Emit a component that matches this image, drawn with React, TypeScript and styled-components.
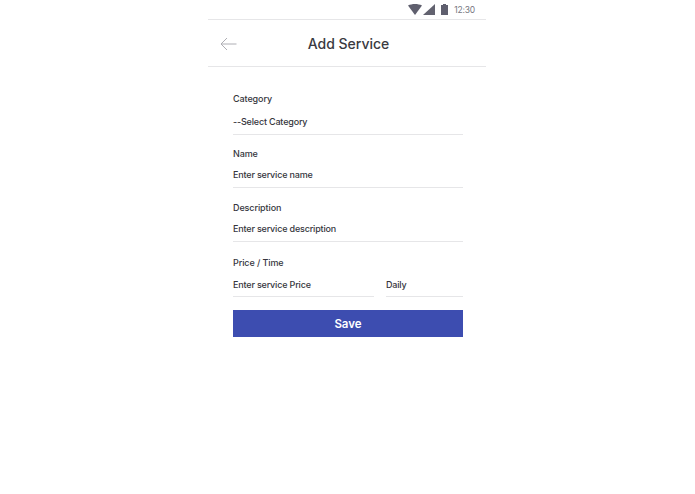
import styled, { createGlobalStyle } from 'styled-components';

const GlobalStyle = createGlobalStyle`
    html, body {
        margin: 0;
        padding: 0;
        background: #fff;
        font-family: Inter, "Liberation Sans", sans-serif;
    }
`;

export default function App() {
    return (
        <Page>
            <GlobalStyle />
            <Phone>
                <StatusBar>
                    <WifiIcon width="14" height="11" viewBox="0 0 14 11">
                        <path d="M0 1.5C4 -0.5 10 -0.5 14 1.5L7 11Z" fill="#5f5f6e" />
                    </WifiIcon>
                    <SignalIcon width="12" height="11" viewBox="0 0 12 11">
                        <path d="M12 0V11H0Z" fill="#62626f" />
                    </SignalIcon>
                    <BatteryIcon width="7" height="11" viewBox="0 0 7 11">
                        <path d="M2 0H5V1H7V11H0V1H2Z" fill="#5f5f6e" />
                    </BatteryIcon>
                    <Clock>12:30</Clock>
                </StatusBar>
                <Header>
                    <BackIcon width="17" height="14" viewBox="0 0 17 14">
                        <path d="M16.5 7H1M7 1L1 7L7 13" fill="none" stroke="#aeaeb4" strokeWidth="1" />
                    </BackIcon>
                    <Title>Add Service</Title>
                </Header>
                <Form>
                    <Field $height={55} $gap={5}>
                        <Label>Category</Label>
                        <Value>--Select Category</Value>
                    </Field>
                    <Field $height={54} $gap={3}>
                        <Label>Name</Label>
                        <Value>Enter service name</Value>
                    </Field>
                    <Field $height={55} $gap={3}>
                        <Label>Description</Label>
                        <Value>Enter service description</Value>
                    </Field>
                    <PriceRow>
                        <Field $height={41} $gap={4}>
                            <Label>Price / Time</Label>
                            <Value>Enter service Price</Value>
                        </Field>
                        <Field $height={41} $gap={4}>
                            <Label />
                            <Value>Daily</Value>
                        </Field>
                    </PriceRow>
                    <SaveButton>Save</SaveButton>
                </Form>
            </Phone>
        </Page>
    );
}

const Page = styled.div`
    display: flex;
    justify-content: center;
    width: 100%;
    height: 100vh;
    background: #fff;
`;

const Phone = styled.div`
    display: flex;
    flex-direction: column;
    width: 278px;
    margin-left: -1px;
`;

const StatusBar = styled.div`
    display: flex;
    align-items: center;
    justify-content: flex-end;
    height: 19px;
    padding-right: 11px;
    border-bottom: 1px solid #e6e6e8;
`;

const WifiIcon = styled.svg`
    margin-right: 1px;
`;

const SignalIcon = styled.svg`
    margin-right: 6px;
`;

const BatteryIcon = styled.svg`
    margin-right: 6px;
`;

const Clock = styled.span`
    font-size: 8.5px;
    letter-spacing: -0.2px;
    color: #77777f;
`;

const Header = styled.div`
    position: relative;
    display: flex;
    align-items: center;
    justify-content: center;
    height: 46px;
    padding-left: 3px;
    border-bottom: 1px solid #e6e6e8;
`;

const BackIcon = styled.svg`
    position: absolute;
    left: 12px;
    top: 17px;
`;

const Title = styled.h1`
    margin: 0;
    font-size: 14px;
    font-weight: 500;
    letter-spacing: 0;
    color: #3a3a41;
`;

const Form = styled.div`
    display: flex;
    flex-direction: column;
    margin-top: 25px;
    padding: 0 23px 0 25px;
`;

const Field = styled.div<{ $height: number; $gap: number }>`
    display: flex;
    flex-direction: column;
    gap: ${props => props.$gap}px;
    height: ${props => props.$height}px;
`;

const Label = styled.label`
    height: 14px;
    font-size: 9px;
    line-height: 14px;
    font-weight: 500;
    letter-spacing: -0.1px;
    color: #36363d;
`;

const Value = styled.div`
    height: 24px;
    box-sizing: border-box;
    border-bottom: 1px solid #e6e6e8;
    font-size: 9px;
    line-height: 22px;
    font-weight: 500;
    letter-spacing: -0.18px;
    color: #36363d;
`;

const PriceRow = styled.div`
    display: grid;
    grid-template-columns: 141px 77px;
    justify-content: space-between;
`;

const SaveButton = styled.button`
    height: 27px;
    margin-top: 13px;
    padding: 0;
    border: 0;
    background: #3d4db0;
    color: #fff;
    font-family: inherit;
    font-size: 11.5px;
    font-weight: 600;
`;
